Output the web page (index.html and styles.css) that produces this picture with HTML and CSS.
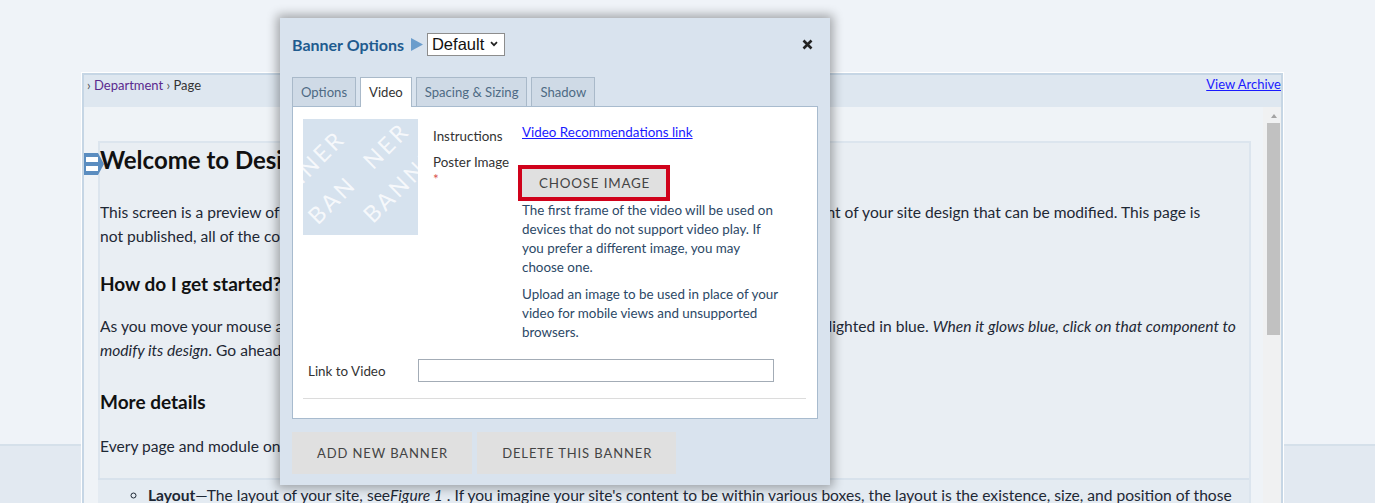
FILE: index.html
```html
<!DOCTYPE html>
<html lang="en">
<head>
<meta charset="utf-8">
<title>Banner Options</title>
<link rel="stylesheet" href="styles.css">
</head>
<body>
<div class="frame">
  <div class="frame-head">
    <div class="crumbs"><span class="sep">›</span> <a class="crumb-link" href="#">Department</a> <span class="sep">›</span> Page</div>
    <a class="archive" href="#">View Archive</a>
  </div>
  <div class="frame-body">
    <div class="content">
      <div class="article">
        <svg class="handle" width="20" height="22" viewBox="0 0 20 22"><path d="M0 0H14L20 11L14 22H0Z" fill="#5b8dc0"/><rect x="2" y="4" width="12" height="5" fill="#fff"/><rect x="2" y="13" width="12" height="5" fill="#fff"/></svg>
        <h1 class="h1">Welcome to Design Mode</h1>
        <p class="p1">This screen is a preview of your site's design. Every box, heading and line of text you see here is a compo<span>nent of your site design that can be modified. This page is</span><br>not published, all of the content shown here is only used to preview your changes.</p>
        <h2 class="h2a">How do I get started?</h2>
        <p class="p2">As you move your mouse around different areas of this page, each editable element of your site will be high<span>lighted in blue. <em>When it glows blue, click on that component to</em></span><br><em>modify its design</em>. Go ahead and try it out with the heading above.</p>
        <h2 class="h2b">More details</h2>
        <p class="p3">Every page and module on your site is made up of a few basic design elements.</p>
        <div class="list-box">
          <ul>
            <li><strong>Layout</strong>—The layout of your site, see<em>Figure 1</em> . If you imagine your site's content to be within various boxes, the layout is the existence, size, and position of those</li>
          </ul>
        </div>
      </div>
    </div>
    <div class="scrollbar">
      <div class="sb-arrow"></div>
      <div class="sb-thumb"></div>
    </div>
  </div>
</div>

<div class="modal">
  <div class="title-row">
    <span class="title">Banner Options</span>
    <svg class="tri" width="12" height="13" viewBox="0 0 12 13"><path d="M0 0L12 6.5L0 13Z" fill="#6b9dcc"/></svg>
    <div class="select">Default <svg width="8" height="6" viewBox="0 0 8 6"><path d="M1 1.2L4 4.2L7 1.2" fill="none" stroke="#222" stroke-width="1.7"/></svg></div>
    <svg class="close" width="11" height="11" viewBox="0 0 11 11"><path d="M1.5 1.5L9.5 9.5M9.5 1.5L1.5 9.5" stroke="#222" stroke-width="2.6"/></svg>
  </div>
  <div class="tabs">
    <div class="tab">Options</div>
    <div class="tab active">Video</div>
    <div class="tab">Spacing &amp; Sizing</div>
    <div class="tab">Shadow</div>
  </div>
  <div class="panel">
    <div class="panel-top">
      <svg class="poster" width="115" height="116" viewBox="0 0 115 116">
        <rect width="115" height="116" fill="#d6e2ee"/>
        <g transform="rotate(-45)" fill="#ffffff" fill-opacity="0.8" font-family="Lato, sans-serif" font-size="23" letter-spacing="3">
          <text x="-95" y="46">BANNER</text>
          <text x="-65" y="86">BAN</text>
          <text x="13" y="86">NER</text>
          <text x="-25" y="124">BANNER</text>
        </g>
      </svg>
      <div class="form">
        <div class="row">
          <div class="label l1">Instructions</div>
          <div class="value"><a class="vlink" href="#">Video Recommendations link</a></div>
        </div>
        <div class="row">
          <div class="label l2">Poster Image<div class="req">*</div></div>
          <div class="value">
            <div class="choose">CHOOSE IMAGE</div>
            <div class="help">
              <p>The first frame of the video will be used on devices that do not support video play. If you prefer a different image, you may choose one.</p>
              <p>Upload an image to be used in place of your video for mobile views and unsupported browsers.</p>
            </div>
          </div>
        </div>
      </div>
    </div>
    <div class="link-row">
      <div class="link-label">Link to Video</div>
      <div class="input"></div>
    </div>
    <div class="rule"></div>
  </div>
  <div class="actions">
    <div class="btn">ADD NEW BANNER</div>
    <div class="btn">DELETE THIS BANNER</div>
  </div>
</div>
</body>
</html>
```

FILE: styles.css
```css
html, body {
  margin: 0;
  padding: 0;
}
body {
  width: 1375px;
  height: 503px;
  overflow: hidden;
  position: relative;
  font-family: Lato, "Open Sans", sans-serif;
  background: linear-gradient(#eff3f8 0 444px, #d5e0ea 444px 446px, #e2e9f1 446px);
}

/* background page frame */
.frame {
  margin: 73px 0 0 82px;
  width: 1201px;
  height: 600px;
  box-sizing: border-box;
  border: 2px solid #c6d6e5;
  box-shadow: 0 0 0 1px #fff;
  background: #eff3f7;
  display: flex;
  flex-direction: column;
}
.frame-head {
  height: 32px;
  flex: none;
  background: #dee7f0;
  display: flex;
  justify-content: space-between;
  align-items: flex-start;
  padding: 1px 0 0 3px;
  box-sizing: border-box;
  font-size: 13px;
  line-height: 18px;
  color: #333;
}
.crumbs .sep { color: #555; }
.crumb-link { color: #5a2a8e; text-decoration: none; }
.archive { color: #1a1aff; text-decoration: underline; line-height: 16px; }

.frame-body {
  flex: 1;
  display: flex;
  min-width: 0;
}
.content {
  flex: 1;
  min-width: 0;
  overflow: hidden;
  padding: 34px 12px 0 14px;
}
.article {
  position: relative;
  border: 2px solid #dce5ee;
  background: #e9eef3;
  padding: 3px 10px 0 0;
  color: #1e2835;
  font-size: 15.6px;
  line-height: 24px;
  height: 420px;
}
.handle {
  position: absolute;
  left: -16px;
  top: 10px;
}
.h1 {
  margin: 0;
  font-size: 24px;
  line-height: 28px;
  font-weight: 700;
  color: #111;
}
.article p { margin: 0; white-space: nowrap; overflow: hidden; }
.article h2 { margin: 0; font-size: 19px; line-height: 24px; font-weight: 700; color: #111; }
.p1 { margin-top: 26px !important; }
.h2a { margin-top: 24px !important; }
.p2 { margin-top: 18px !important; }
.h2b { margin-top: 28px !important; }
.p3 { margin-top: 20px !important; }
.list-box {
  margin-top: 20px;
  margin-left: -2px;
  margin-right: -10px;
  border-top: 2px solid #d8e2ec;
  background: #e4ebf2;
  height: 60px;
  overflow: hidden;
}
.list-box ul {
  margin: 0;
  padding: 3px 0 0 50px;
  list-style: circle;
  white-space: nowrap;
}

.scrollbar {
  width: 18px;
  flex: none;
  background: #f0f1f2;
  padding: 7px 1px 0 4px;
  box-sizing: border-box;
}
.sb-arrow {
  width: 0;
  height: 0;
  margin: 0 0 5px 4px;
  border-left: 3px solid transparent;
  border-right: 3px solid transparent;
  border-bottom: 4px solid #a3a3a3;
}
.sb-thumb {
  width: 13px;
  height: 212px;
  background: #c1c1c1;
}

/* modal */
.modal {
  position: absolute;
  left: 280px;
  top: 18px;
  width: 550px;
  height: 467px;
  box-sizing: border-box;
  padding: 14px 12px 0;
  background: #d9e3ee;
  box-shadow: 0 0 10px 3px rgba(0, 0, 0, 0.33);
}
.title-row {
  display: flex;
  align-items: center;
  height: 24px;
}
.title {
  font-size: 16px;
  font-weight: 700;
  color: #1f5b8f;
}
.tri { margin: 0 4px 0 7px; }
.select {
  width: 78px;
  height: 23px;
  box-sizing: border-box;
  border: 1px solid #8d8d8d;
  background: #fff;
  display: flex;
  align-items: center;
  gap: 6px;
  padding: 0 0 0 4px;
  font-family: "Liberation Sans", Arial, sans-serif;
  font-size: 16.5px;
  color: #111;
}
.close { margin-left: auto; margin-right: 5px; }

.tabs {
  display: flex;
  gap: 4px;
  margin-top: 21px;
  height: 29px;
  align-items: flex-end;
  position: relative;
  z-index: 1;
}
.tab {
  height: 29px;
  box-sizing: border-box;
  padding: 0 8px;
  border: 1px solid #a9b9c9;
  border-bottom: none;
  background: #cfdae6;
  font-size: 13.1px;
  line-height: 28px;
  color: #4e6a84;
}
.tab.active {
  height: 30px;
  margin-bottom: -1px;
  background: #fff;
  color: #333;
}
.panel {
  height: 313px;
  box-sizing: border-box;
  border: 1px solid #a8bbce;
  background: #fff;
}
.panel-top {
  display: flex;
  padding: 12px 10px 0 10px;
}
.poster { flex: none; display: block; }
.form {
  margin-left: 15px;
  font-size: 13.4px;
  line-height: 18px;
  color: #333;
}
.row {
  display: flex;
}
.label { width: 89px; flex: none; }
.l1 { margin-top: 8px; }
.l2 { margin-top: 8px; }
.req { color: #d9534f; line-height: 16px; }
.value { margin-top: 4px; }
.vlink { color: #1a1aff; text-decoration: underline; }
.choose {
  display: inline-block;
  margin-top: 20px;
  height: 28px;
  line-height: 28px;
  padding: 0 16px 0 17px;
  background: #e0e0e0;
  outline: 4px solid #d0021b;
  letter-spacing: 0.8px;
  color: #444;
}
.help {
  margin-top: 4px;
  width: 258px;
  line-height: 19px;
  color: #2c4866;
}
.help p { margin: 0 0 8px; }
.help p:last-child { margin-bottom: 0; }

.link-row {
  display: flex;
  align-items: center;
  margin-top: 17px;
  padding-left: 15px;
  font-size: 13.4px;
  color: #333;
}
.link-label { width: 110px; }
.input {
  width: 356px;
  height: 23px;
  box-sizing: border-box;
  border: 1px solid #a3acb6;
  background: #fff;
}
.rule {
  margin: 16px 11px 0 10px;
  height: 1px;
  background: #dcdcdc;
}
.actions {
  display: flex;
  gap: 5px;
  margin-top: 13px;
}
.btn {
  height: 42px;
  line-height: 42px;
  padding: 0 24px 0 25px;
  background: #e0e0e0;
  font-size: 13px;
  letter-spacing: 0.9px;
  color: #444;
}
```
